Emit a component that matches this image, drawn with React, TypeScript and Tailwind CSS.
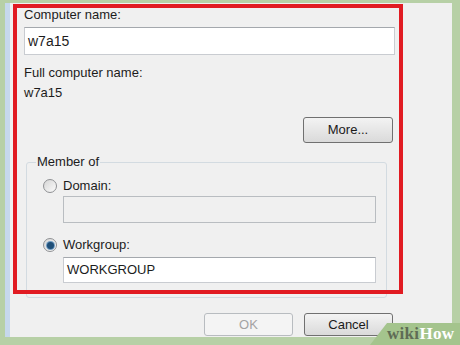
import React from "react";

const font = { fontFamily: '"Liberation Sans", Arial, sans-serif' };

const Radio: React.FC<{ checked?: boolean }> = ({ checked }) => (
  <span className="flex h-[14px] w-[14px] items-center justify-center rounded-full border border-[#8f9194] bg-linear-to-br from-[#d6d6d6] to-[#fbfbfb]">
    {checked && (
      <span className="h-[7px] w-[7px] rounded-full bg-[#1f4f78] shadow-[0_0_0_1px_#6f9cc3]" />
    )}
  </span>
);

const Button: React.FC<{ label: string; disabled?: boolean; className?: string }> = ({
  label,
  disabled,
  className,
}) => (
  <div
    className={
      "flex items-center justify-center rounded-[3px] border text-[13px] " +
      (disabled
        ? "border-[#b8bcc0] bg-[#f4f4f4] text-[#a3a3a3] "
        : "border-[#707070] bg-linear-to-b from-[#f3f3f3] to-[#dadada] text-[#1a1a1a] ") +
      (className ?? "")
    }
  >
    {label}
  </div>
);

export default function App() {
  return (
    <div
      className="relative h-[345px] w-[460px] overflow-hidden bg-[#b7d0a6] pl-[5px] pt-[3px]"
      style={font}
    >
      {/* dialog window */}
      <div className="h-[334px] w-[447px] border-l-[5px] border-l-[#c6d8ec] bg-[#f0f0f0] pl-[14px] pt-[4px] text-[#1c1c1c]">
        <div className="flex w-[371px] flex-col">
          <div className="text-[13px] leading-[16px]">Computer name:</div>
          <div className="mt-[4px] flex h-[28px] items-center border border-[#c9ccd1] border-t-[#a4a8ad] bg-white pl-[3px] text-[14px]">
            w7a15
          </div>
          <div className="mt-[10px] text-[13px] leading-[16px]">Full computer name:</div>
          <div className="mt-[4px] text-[13px] leading-[16px]">w7a15</div>
          <Button label="More..." className="ml-auto mr-[2px] mt-[16px] h-[26px] w-[90px]" />

          <fieldset className="ml-[2px] mt-[11px] w-[361px] rounded-[3px] border border-[#d3dbe1] pb-[14px] pl-[16px]">
            <legend className="ml-[-7px] px-[1px] text-[13px] leading-[16px]">Member of</legend>
            <div className="mt-[8px] flex h-[16px] items-center gap-[6px] text-[13px]">
              <Radio />
              <span>Domain:</span>
            </div>
            <div className="ml-[20px] mt-[2px] h-[27px] w-[313px] border border-[#b9bdc1] bg-[#f0f0f0]" />
            <div className="mt-[14px] flex h-[16px] items-center gap-[6px] text-[13px]">
              <Radio checked />
              <span>Workgroup:</span>
            </div>
            <div className="ml-[20px] mt-[4px] flex h-[26px] w-[313px] items-center border border-[#c9ccd1] border-t-[#a4a8ad] bg-white pl-[3px] text-[13px]">
              WORKGROUP
            </div>
          </fieldset>

          <div className="mr-[2px] mt-[15px] flex justify-end gap-[11px]">
            <Button label="OK" disabled className="h-[23px] w-[89px]" />
            <Button label="Cancel" className="h-[23px] w-[89px]" />
          </div>
        </div>
      </div>

      {/* red highlight annotation */}
      <div className="pointer-events-none absolute left-[13px] top-[4px] h-[290px] w-[390px] border-4 border-[#e11b22]" />

      {/* watermark */}
      <div className="absolute bottom-0 right-0 h-[22px] w-[90px]">
        <svg className="absolute inset-0" width="90" height="22" viewBox="0 0 90 22">
          <polygon points="17,0 90,0 90,22 0,22" fill="#a4c48d" />
        </svg>
        <div
          className="absolute bottom-[2px] left-[17px] text-[17px] font-bold leading-[18px] tracking-[0.3px]"
          style={{ fontFamily: '"Liberation Serif", "Times New Roman", serif' }}
        >
          <span className="text-[#5f6c55]">wiki</span>
          <span className="text-white">How</span>
        </div>
      </div>
    </div>
  );
}
